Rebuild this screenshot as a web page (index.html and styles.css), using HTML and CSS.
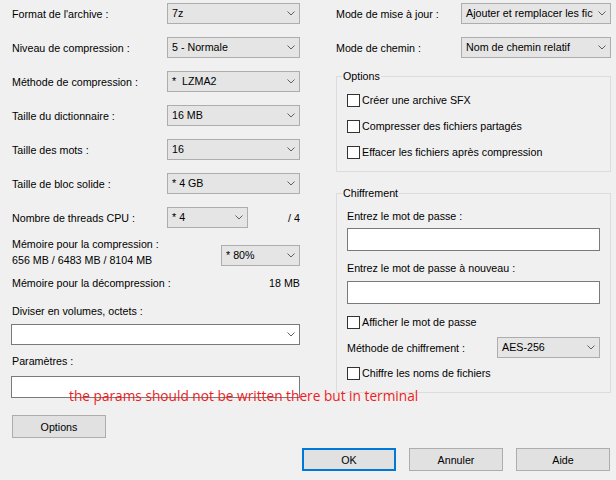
FILE: index.html
```html
<!DOCTYPE html>
<html lang="fr">
<head>
<meta charset="utf-8">
<title>Ajouter à l'archive</title>
<link rel="stylesheet" href="styles.css">
</head>
<body>
<div class="dialog">
  <div class="main">
    <div class="col-left">
      <div class="row"><span class="lbl">Format de l'archive :</span>
        <div class="combo w-main"><span class="val">7z</span><span class="arrow"><svg width="8" height="5" viewBox="0 0 8 5"><polyline points="0.5,0.5 4,4 7.5,0.5"/></svg></span></div></div>
      <div class="row"><span class="lbl">Niveau de compression :</span>
        <div class="combo w-main"><span class="val">5 - Normale</span><span class="arrow"><svg width="8" height="5" viewBox="0 0 8 5"><polyline points="0.5,0.5 4,4 7.5,0.5"/></svg></span></div></div>
      <div class="row"><span class="lbl">Méthode de compression :</span>
        <div class="combo w-main"><span class="val">*&nbsp; LZMA2</span><span class="arrow"><svg width="8" height="5" viewBox="0 0 8 5"><polyline points="0.5,0.5 4,4 7.5,0.5"/></svg></span></div></div>
      <div class="row"><span class="lbl">Taille du dictionnaire :</span>
        <div class="combo w-main"><span class="val">16 MB</span><span class="arrow"><svg width="8" height="5" viewBox="0 0 8 5"><polyline points="0.5,0.5 4,4 7.5,0.5"/></svg></span></div></div>
      <div class="row"><span class="lbl">Taille des mots :</span>
        <div class="combo w-main"><span class="val">16</span><span class="arrow"><svg width="8" height="5" viewBox="0 0 8 5"><polyline points="0.5,0.5 4,4 7.5,0.5"/></svg></span></div></div>
      <div class="row"><span class="lbl">Taille de bloc solide :</span>
        <div class="combo w-main"><span class="val">* 4 GB</span><span class="arrow"><svg width="8" height="5" viewBox="0 0 8 5"><polyline points="0.5,0.5 4,4 7.5,0.5"/></svg></span></div></div>
      <div class="row"><span class="lbl">Nombre de threads CPU :</span>
        <div class="combo w-threads"><span class="val">* 4</span><span class="arrow"><svg width="8" height="5" viewBox="0 0 8 5"><polyline points="0.5,0.5 4,4 7.5,0.5"/></svg></span></div>
        <span class="of">/ 4</span></div>
      <div class="mem-row">
        <div class="mem-text"><div>Mémoire pour la compression :</div><div>656 MB / 6483 MB / 8104 MB</div></div>
        <div class="combo w-mem mem-combo"><span class="val">* 80%</span><span class="arrow"><svg width="8" height="5" viewBox="0 0 8 5"><polyline points="0.5,0.5 4,4 7.5,0.5"/></svg></span></div>
      </div>
      <div class="line-row"><span>Mémoire pour la décompression :</span><span>18 MB</span></div>
      <div class="cap cap-vol">Diviser en volumes, octets :</div>
      <div class="combo edit vol"><span class="val"></span><span class="arrow"><svg width="8" height="5" viewBox="0 0 8 5"><polyline points="0.5,0.5 4,4 7.5,0.5"/></svg></span></div>
      <div class="cap cap-par">Paramètres :</div>
      <div class="textbox params"></div>
      <div class="btn opt-btn">Options</div>
    </div>
    <div class="col-right">
      <div class="row"><span class="lbl lbl-right">Mode de mise à jour :</span>
        <div class="combo w-right"><span class="val">Ajouter et remplacer les fichiers</span><span class="arrow"><svg width="8" height="5" viewBox="0 0 8 5"><polyline points="0.5,0.5 4,4 7.5,0.5"/></svg></span></div></div>
      <div class="row"><span class="lbl lbl-right">Mode de chemin :</span>
        <div class="combo w-right"><span class="val">Nom de chemin relatif</span><span class="arrow"><svg width="8" height="5" viewBox="0 0 8 5"><polyline points="0.5,0.5 4,4 7.5,0.5"/></svg></span></div></div>
      <fieldset class="group group-opts">
        <legend>Options</legend>
        <div class="chk-row"><span class="chk"></span><span>Créer une archive SFX</span></div>
        <div class="chk-row"><span class="chk"></span><span>Compresser des fichiers partagés</span></div>
        <div class="chk-row"><span class="chk"></span><span>Effacer les fichiers après compression</span></div>
      </fieldset>
      <fieldset class="group group-enc">
        <legend>Chiffrement</legend>
        <div class="cap enc-cap1">Entrez le mot de passe :</div>
        <div class="textbox pw pw1"></div>
        <div class="cap enc-cap2">Entrez le mot de passe à nouveau :</div>
        <div class="textbox pw pw2"></div>
        <div class="chk-line show-pw"><span class="chk"></span><span>Afficher le mot de passe</span></div>
        <div class="method-row"><span class="lbl lbl-method">Méthode de chiffrement :</span>
          <div class="combo w-method"><span class="val">AES-256</span><span class="arrow"><svg width="8" height="5" viewBox="0 0 8 5"><polyline points="0.5,0.5 4,4 7.5,0.5"/></svg></span></div></div>
        <div class="chk-line enc-names"><span class="chk"></span><span>Chiffre les noms de fichiers</span></div>
      </fieldset>
    </div>
  </div>
  <div class="buttons">
    <div class="btn default">OK</div>
    <div class="btn">Annuler</div>
    <div class="btn">Aide</div>
  </div>
</div>
<div class="note">the params should not be written there but in terminal</div>
</body>
</html>
```
FILE: styles.css
```css
* { box-sizing: border-box; }
html, body {
  margin: 0;
  padding: 0;
  width: 616px;
  height: 480px;
  background: #f0f0f0;
  overflow: hidden;
}
body {
  position: relative;
  font-family: "Liberation Sans", Arial, sans-serif;
  font-size: 10.7px;
  color: #000;
}
.dialog {
  display: flex;
  flex-direction: column;
  width: 616px;
  height: 480px;
}
.main {
  display: flex;
  align-items: flex-start;
  gap: 36px;
  padding: 3px 0 0 11px;
}
.col-left {
  width: 289px;
  display: flex;
  flex-direction: column;
}
.col-right {
  width: 275px;
  display: flex;
  flex-direction: column;
}
.row {
  display: flex;
  align-items: center;
  height: 21px;
}
.row + .row { margin-top: 13px; }
.lbl {
  flex: none;
  width: 156px;
  white-space: nowrap;
  padding-left: 1px;
}
.lbl-right { width: 125px; padding-left: 0; }
.lbl-method { width: 150px; padding-left: 0; }
.combo {
  display: flex;
  align-items: center;
  height: 21px;
  background: #e5e5e5;
  border: 1px solid #adadad;
  flex: none;
}
.combo .val {
  flex: 1;
  overflow: hidden;
  white-space: nowrap;
  padding-left: 4px;
  line-height: 19px;
}
.combo .arrow {
  flex: none;
  width: 17px;
  height: 19px;
  display: flex;
  align-items: center;
  justify-content: center;
}
.combo svg polyline {
  fill: none;
  stroke: #606060;
  stroke-width: 1;
}
.w-main { width: 133px; }
.w-threads { width: 81px; }
.w-mem { width: 79px; }
.w-right { width: 150px; }
.w-method { width: 103px; }
.combo.edit {
  background: #fff;
  border-color: #7a7a7a;
}
.of {
  flex: 1;
  text-align: right;
}
.mem-row {
  display: flex;
  margin-top: 8px;
  line-height: 16px;
}
.mem-text {
  flex: 1;
  padding-left: 1px;
}
.mem-combo { margin-top: 9px; }
.line-row {
  display: flex;
  justify-content: space-between;
  line-height: 16px;
  margin-top: 7px;
  padding-left: 1px;
}
.cap {
  line-height: 16px;
  padding-left: 1px;
}
.cap-vol { margin-top: 12px; }
.vol { margin-top: 5px; width: 289px; }
.cap-par { margin-top: 8px; }
.textbox {
  background: #fff;
  border: 1px solid #7a7a7a;
}
.params { margin-top: 7px; height: 22px; width: 289px; }
.btn {
  width: 94px;
  height: 23px;
  background: #e1e1e1;
  border: 1px solid #adadad;
  display: flex;
  align-items: center;
  justify-content: center;
}
.btn.default { border: 2px solid #0078d7; }
.opt-btn { margin-top: 17px; margin-left: 1px; }
.buttons {
  display: flex;
  justify-content: flex-end;
  gap: 13px;
  margin-top: 10px;
  padding-right: 6px;
}
.group {
  margin: 0;
  border: 1px solid #dcdcdc;
  padding: 0 10px;
  min-width: 0;
}
.group legend {
  padding: 0 1px;
  margin-left: -5px;
  line-height: 14px;
}
.group-opts {
  margin-top: 11px;
  padding-top: 4px;
  padding-bottom: 6px;
}
.chk-row {
  display: flex;
  align-items: center;
  height: 26px;
}
.chk {
  width: 13px;
  height: 13px;
  background: #fff;
  border: 1px solid #333;
  flex: none;
  margin-right: 2px;
}
.group-enc {
  margin-top: 14px;
  padding-top: 8px;
  padding-bottom: 11px;
}
.enc-cap1, .enc-cap2 { padding-left: 0; }
.pw { height: 23px; width: 253px; }
.pw1 { margin-top: 4px; }
.enc-cap2 { margin-top: 9px; }
.pw2 { margin-top: 5px; }
.chk-line {
  display: flex;
  align-items: center;
  height: 16px;
}
.show-pw { margin-top: 10px; }
.method-row {
  display: flex;
  align-items: center;
  height: 21px;
  margin-top: 7px;
}
.enc-names { margin-top: 7px; }
.note {
  position: absolute;
  left: 69px;
  top: 388px;
  font-family: "Open Sans", "Noto Sans", sans-serif;
  font-size: 13.7px;
  line-height: 16px;
  color: #ed1c24;
  white-space: nowrap;
}
```
